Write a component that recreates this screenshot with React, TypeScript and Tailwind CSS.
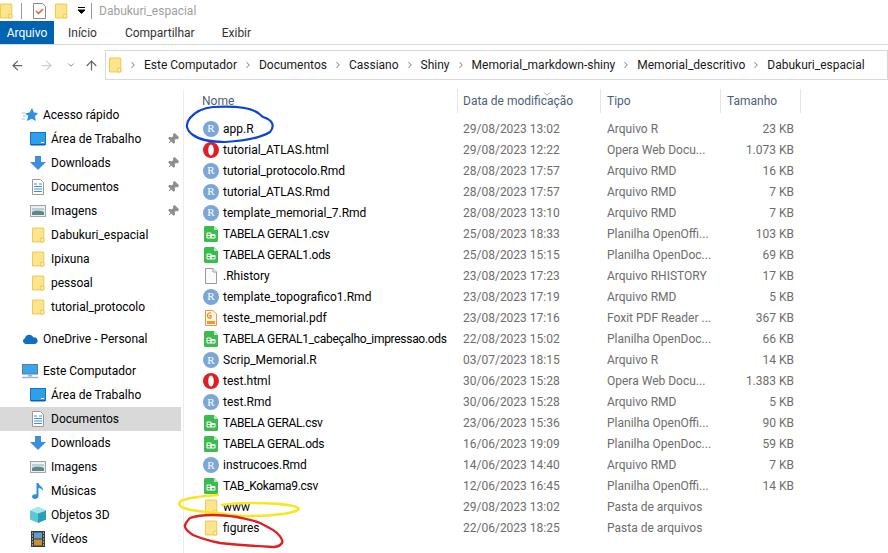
import { ArrowLeft, ArrowRight, ArrowUp, ChevronDown, ChevronRight, Pin } from "lucide-react";

type IconKind = "r" | "opera" | "sheet" | "blank" | "pdf" | "folder";

const files: { name: string; date: string; type: string; size: string; icon: IconKind }[] = [
    { name: "app.R", date: "29/08/2023 13:02", type: "Arquivo R", size: "23 KB", icon: "r" },
    { name: "tutorial_ATLAS.html", date: "29/08/2023 12:22", type: "Opera Web Docu...", size: "1.073 KB", icon: "opera" },
    { name: "tutorial_protocolo.Rmd", date: "28/08/2023 17:57", type: "Arquivo RMD", size: "16 KB", icon: "r" },
    { name: "tutorial_ATLAS.Rmd", date: "28/08/2023 17:57", type: "Arquivo RMD", size: "7 KB", icon: "r" },
    { name: "template_memorial_7.Rmd", date: "28/08/2023 13:10", type: "Arquivo RMD", size: "7 KB", icon: "r" },
    { name: "TABELA GERAL1.csv", date: "25/08/2023 18:33", type: "Planilha OpenOffi...", size: "103 KB", icon: "sheet" },
    { name: "TABELA GERAL1.ods", date: "25/08/2023 15:15", type: "Planilha OpenDoc...", size: "69 KB", icon: "sheet" },
    { name: ".Rhistory", date: "23/08/2023 17:23", type: "Arquivo RHISTORY", size: "17 KB", icon: "blank" },
    { name: "template_topografico1.Rmd", date: "23/08/2023 17:19", type: "Arquivo RMD", size: "5 KB", icon: "r" },
    { name: "teste_memorial.pdf", date: "23/08/2023 17:16", type: "Foxit PDF Reader ...", size: "367 KB", icon: "pdf" },
    { name: "TABELA GERAL1_cabeçalho_impressao.ods", date: "22/08/2023 15:02", type: "Planilha OpenDoc...", size: "66 KB", icon: "sheet" },
    { name: "Scrip_Memorial.R", date: "03/07/2023 18:15", type: "Arquivo R", size: "14 KB", icon: "r" },
    { name: "test.html", date: "30/06/2023 15:28", type: "Opera Web Docu...", size: "1.383 KB", icon: "opera" },
    { name: "test.Rmd", date: "30/06/2023 15:28", type: "Arquivo RMD", size: "5 KB", icon: "r" },
    { name: "TABELA GERAL.csv", date: "23/06/2023 15:36", type: "Planilha OpenOffi...", size: "90 KB", icon: "sheet" },
    { name: "TABELA GERAL.ods", date: "16/06/2023 19:09", type: "Planilha OpenDoc...", size: "59 KB", icon: "sheet" },
    { name: "instrucoes.Rmd", date: "14/06/2023 14:40", type: "Arquivo RMD", size: "7 KB", icon: "r" },
    { name: "TAB_Kokama9.csv", date: "12/06/2023 16:45", type: "Planilha OpenOffi...", size: "14 KB", icon: "sheet" },
    { name: "www", date: "29/08/2023 13:02", type: "Pasta de arquivos", size: "", icon: "folder" },
    { name: "figures", date: "22/06/2023 18:25", type: "Pasta de arquivos", size: "", icon: "folder" },
];

const crumbs = ["Este Computador", "Documentos", "Cassiano", "Shiny", "Memorial_markdown-shiny", "Memorial_descritivo", "Dabukuri_espacial"];

function FolderIcon({ className }: { className?: string }) {
    return (
        <svg viewBox="0 0 14 16" className={className}>
            <path d="M.5.5h12.2v15H.5z" fill="#fde48f" stroke="#eec643" />
            <path d="M9.5 15.5v-4h3.2v4z" fill="#fff2bd" stroke="#eec643" />
        </svg>
    );
}

function RIcon() {
    return (
        <span className="flex h-4 w-4 shrink-0 items-center justify-center rounded-full bg-[#7ba7d7] font-['Liberation_Serif',serif] text-[11px] leading-none text-white">R</span>
    );
}

function OperaIcon() {
    return (
        <svg viewBox="0 0 16 16" className="h-4 w-4 shrink-0">
            <path fillRule="evenodd" d="M8 0a8 8 0 1 0 0 16A8 8 0 0 0 8 0zm0 2.500c1.700 0 2.800 2.500 2.800 5.500S9.700 13.500 8 13.500 5.200 11 5.200 8 6.300 2.500 8 2.500z" fill="#dc1f28" />
        </svg>
    );
}

function SheetIcon() {
    return (
        <svg viewBox="0 0 16 16" className="h-4 w-4 shrink-0">
            <path d="M1 1.500A1.500 1.500 0 0 1 2.500 0H11l4 4v10.500a1.500 1.500 0 0 1-1.500 1.500h-11A1.500 1.500 0 0 1 1 14.500z" fill="#3dbb4e" />
            <path d="M11 0l4 4h-4z" fill="#b5e8ba" />
            <path d="M4 7h4v5H4zM8 8.500h4V12H8z" fill="none" stroke="#fff" strokeWidth="1" />
            <path d="M4 9.500h8" stroke="#fff" strokeWidth="1" />
        </svg>
    );
}

function BlankIcon() {
    return (
        <svg viewBox="0 0 16 16" className="h-4 w-4 shrink-0">
            <path d="M2.500.5h7.500l3.500 3.500v11.500h-11z" fill="#fafafa" stroke="#9a9a9a" />
            <path d="M10 .5v3.500h3.500" fill="#fff" stroke="#9a9a9a" />
        </svg>
    );
}

function PdfIcon() {
    return (
        <svg viewBox="0 0 16 16" className="h-4 w-4 shrink-0">
            <path d="M2.500.5h7.500l3.500 3.500v11.500h-11z" fill="#fff7ec" stroke="#ef9a2e" />
            <path d="M10.500 2.500a3 3 0 1 0 0 5.500V5.500H8" fill="none" stroke="#ef8a1e" strokeWidth="1.500" transform="translate(-1 1) scale(.85)" />
            <path d="M4 11h8v3H4z" fill="#ef9a2e" />
        </svg>
    );
}

function FileIcon({ kind }: { kind: IconKind }) {
    if (kind === "r") return <RIcon />;
    if (kind === "opera") return <OperaIcon />;
    if (kind === "sheet") return <SheetIcon />;
    if (kind === "pdf") return <PdfIcon />;
    if (kind === "folder") return <span className="flex w-4 shrink-0 justify-center"><FolderIcon className="h-4 w-[13px]" /></span>;
    return <BlankIcon />;
}

function DesktopIcon() {
    return (
        <svg viewBox="0 0 16 14" className="h-[14px] w-4">
            <rect x=".5" y=".5" width="15" height="12" fill="#2f9fe8" stroke="#1473c4" />
            <path d="M1 12h14v1.500H1z" fill="#0e5fb0" />
            <path d="M11 10.500h3" stroke="#fff" />
        </svg>
    );
}

function DownloadIcon() {
    return (
        <svg viewBox="0 0 16 14" className="h-[14px] w-4">
            <path d="M5 0h6v6h5l-8 8-8-8h5z" fill="#3b8fdd" />
        </svg>
    );
}

function DocIcon() {
    return (
        <svg viewBox="0 0 12 16" className="h-4 w-3">
            <path d="M.5.500h8l3 3v12H.5z" fill="#fff" stroke="#9a9a9a" />
            <path d="M2 5h3M7 5h3M2 7.500h8M2 10h8M2 12.500h8" stroke="#3f8fd8" />
        </svg>
    );
}

function ImageIcon() {
    return (
        <svg viewBox="0 0 16 12" className="h-3 w-4">
            <rect x=".5" y=".5" width="15" height="11" fill="#e9f1f6" stroke="#a5a5a5" />
            <path d="M2 7c3-2 8-2 12 0v3H2z" fill="#5d8a80" />
            <path d="M2 3h12v2.500H2z" fill="#b5cfe0" />
        </svg>
    );
}

function MusicIcon() {
    return (
        <svg viewBox="0 0 14 16" className="h-4 w-[14px]">
            <path d="M5.500 0h2c.5 3 5 3.500 4.500 8-1-2-2.500-3-4.500-3v8c0 2-1.700 3-3.500 3S1 15 1 13.500 2.500 11 5.500 11.200z" fill="#2a8fe6" />
        </svg>
    );
}

function CubeIcon() {
    return (
        <svg viewBox="0 0 16 16" className="h-4 w-4">
            <path d="M8 0l8 3.500v9L8 16 0 12.500v-9z" fill="#5fc8d8" />
            <path d="M8 6.500l8-3v9L8 16z" fill="#2b9fb8" />
            <path d="M0 3.500l8 3L16 3.500 8 0z" fill="#a6e7ee" />
        </svg>
    );
}

function VideoIcon() {
    return (
        <svg viewBox="0 0 14 16" className="h-4 w-[14px]">
            <rect width="14" height="16" fill="#3a3a3a" />
            <rect x="3" y="1.500" width="8" height="6" fill="#5f9fd0" />
            <rect x="3" y="8.500" width="8" height="6" fill="#c8902f" />
            <path d="M1 2h1M1 5h1M1 8h1M1 11h1M1 14h1M12 2h1M12 5h1M12 8h1M12 11h1M12 14h1" stroke="#fff" />
        </svg>
    );
}

function QuickAccessIcon() {
    return (
        <svg viewBox="0 0 16 16" className="h-4 w-4">
            <path d="M10 1l2 4.500 4 .5-3 3.200.8 4.800-4-2.300-5 2.300 1.500-5L3 6.500l4.500-1z" fill="#2f8fe0" />
            <path d="M0 6h3M1 9h3M0 12h3" stroke="#9cc7ea" />
        </svg>
    );
}

function OneDriveIcon() {
    return (
        <svg viewBox="0 0 16 10" className="h-[10px] w-4">
            <path d="M3.500 10A3 3 0 0 1 3 4.200 4.500 4.500 0 0 1 11.500 3.500 3.300 3.300 0 0 1 13 10z" fill="#0f6fc6" />
        </svg>
    );
}

function PcIcon() {
    return (
        <svg viewBox="0 0 16 15" className="h-[15px] w-4">
            <rect x=".5" y=".5" width="15" height="9.500" fill="#3ba4ea" stroke="#5a7d9c" />
            <path d="M6 10.500h4v2H6z" fill="#9ab4c8" />
            <path d="M0 13.500h16" stroke="#9fb5c6" strokeWidth="1.500" />
        </svg>
    );
}

function NavRow({ label, icon, pinned, selected }: { label: string; icon: React.ReactNode; pinned?: boolean; selected?: boolean }) {
    return (
        <div className={`flex h-6 w-[181px] items-center pl-[30px] ${selected ? "bg-[#d9d9d9]" : ""}`}>
            <span className="flex w-4 justify-center">{icon}</span>
            <span className="ml-[5px] flex-1 text-black">{label}</span>
            {pinned && <Pin size={12} fill="#8f8f8f" className="mr-[2px] rotate-45 text-[#8f8f8f]" />}
        </div>
    );
}

function TopRow({ label, icon }: { label: string; icon: React.ReactNode }) {
    return (
        <div className="flex h-6 items-center pl-[22px]">
            <span className="flex w-4 justify-center">{icon}</span>
            <span className="ml-[5px] text-black">{label}</span>
        </div>
    );
}

function HeaderCell({ label, className }: { label: string; className: string }) {
    return <div className={`flex h-[24px] items-center border-r border-[#e5e5e5] ${className}`}>{label}</div>;
}

export default function App() {
    return (
        <div className="relative h-[553px] w-[888px] overflow-hidden bg-white font-['Roboto',sans-serif] text-[12px] text-black">
            {/* title bar */}
            <div className="flex h-[21px] items-center">
                <FolderIcon className="h-4 w-[13px]" />
                <span className="ml-2 h-4 w-px bg-[#9a9a9a]" />
                <svg viewBox="0 0 13 16" className="ml-[11px] h-4 w-[13px]">
                    <path d="M.5.500h9l3 3v12H.5z" fill="#fff" stroke="#8a8a8a" />
                    <path d="M3 8l2.500 2.500L10 6" fill="none" stroke="#e8562a" strokeWidth="1.500" />
                </svg>
                <FolderIcon className="ml-[9px] h-4 w-[13px]" />
                <svg viewBox="0 0 9 7" className="ml-[9px] h-[7px] w-[9px]">
                    <path d="M1 .5h7M1 3h7L4.500 6.500z" fill="#000" stroke="#000" strokeWidth="1" />
                </svg>
                <span className="ml-[5px] h-4 w-px bg-[#9a9a9a]" />
                <span className="ml-[7px] text-[#a0a0a0]">Dabukuri_espacial</span>
            </div>

            {/* ribbon tabs */}
            <div className="flex h-[24px] items-center border-b border-[#dadada] text-[#333]">
                <div className="flex h-[23px] w-[54px] items-center justify-center bg-[#0063b1] text-white">Arquivo</div>
                <span className="ml-[14px]">Início</span>
                <span className="ml-[28px]">Compartilhar</span>
                <span className="ml-[27px]">Exibir</span>
            </div>

            {/* nav + address bar */}
            <div className="mt-[5px] flex h-[30px] items-center">
                <ArrowLeft size={15} strokeWidth={2} className="ml-[10px] text-[#666]" />
                <ArrowRight size={15} strokeWidth={2} className="ml-[14px] text-[#cfcfcf]" />
                <ChevronDown size={10} strokeWidth={2} className="ml-[12px] text-[#777]" />
                <ArrowUp size={15} strokeWidth={2} className="ml-[8px] text-[#666]" />
                <div className="ml-[6px] flex h-[30px] flex-1 items-center overflow-hidden whitespace-nowrap border border-[#d9d9d9] pl-[3px] text-[#1a1a1a]">
                    <FolderIcon className="h-4 w-[13px] shrink-0" />
                    {crumbs.map((c) => (
                        <span key={c} className="flex shrink-0 items-center">
                            <ChevronRight size={10} strokeWidth={2.5} className="mx-[6px] text-[#8a8a8a]" />
                            <span>{c}</span>
                        </span>
                    ))}
                </div>
            </div>

            <div className="mt-[9px] flex">
                {/* nav pane */}
                <div className="h-[470px] w-[184px] shrink-0 border-r border-[#ededed] pt-[14px]">
                    <TopRow label="Acesso rápido" icon={<QuickAccessIcon />} />
                    <NavRow label="Área de Trabalho" icon={<DesktopIcon />} pinned />
                    <NavRow label="Downloads" icon={<DownloadIcon />} pinned />
                    <NavRow label="Documentos" icon={<DocIcon />} pinned />
                    <NavRow label="Imagens" icon={<ImageIcon />} pinned />
                    <NavRow label="Dabukuri_espacial" icon={<FolderIcon className="h-4 w-[13px]" />} />
                    <NavRow label="Ipixuna" icon={<FolderIcon className="h-4 w-[13px]" />} />
                    <NavRow label="pessoal" icon={<FolderIcon className="h-4 w-[13px]" />} />
                    <NavRow label="tutorial_protocolo" icon={<FolderIcon className="h-4 w-[13px]" />} />
                    <div className="mt-2"><TopRow label="OneDrive - Personal" icon={<OneDriveIcon />} /></div>
                    <div className="mt-2"><TopRow label="Este Computador" icon={<PcIcon />} /></div>
                    <NavRow label="Área de Trabalho" icon={<DesktopIcon />} />
                    <NavRow label="Documentos" icon={<DocIcon />} selected />
                    <NavRow label="Downloads" icon={<DownloadIcon />} />
                    <NavRow label="Imagens" icon={<ImageIcon />} />
                    <NavRow label="Músicas" icon={<MusicIcon />} />
                    <NavRow label="Objetos 3D" icon={<CubeIcon />} />
                    <NavRow label="Vídeos" icon={<VideoIcon />} />
                </div>

                {/* file list */}
                <div className="flex-1 pl-[18px]">
                    <div className="relative flex h-[29px] text-[#4c607a]">
                        <ChevronDown size={10} className="absolute left-[340px] top-0 text-[#9a9a9a]" />
                        <HeaderCell label="Nome" className="w-[256px]" />
                        <HeaderCell label="Data de modificação" className="w-[143px] pl-[5px]" />
                        <HeaderCell label="Tipo" className="w-[120px] pl-[6px]" />
                        <HeaderCell label="Tamanho" className="w-[80px] pl-[6px]" />
                    </div>
                    {files.map((f) => (
                        <div key={f.name} className="flex h-[21.05px] items-center">
                            <div className="flex w-[256px] items-center pl-px">
                                <FileIcon kind={f.icon} />
                                <span className={`ml-1 whitespace-nowrap ${f.icon === "sheet" ? "tracking-[-0.3px]" : ""}`}>{f.name}</span>
                            </div>
                            <div className="w-[143px] pl-[5px] text-[#6d6d6d]">{f.date}</div>
                            <div className="w-[120px] pl-[6px] text-[#6d6d6d]">{f.type}</div>
                            <div className="w-[73px] text-right text-[#6d6d6d]">{f.size}</div>
                        </div>
                    ))}
                </div>
            </div>

            {/* hand-drawn marks */}
            <svg viewBox="0 0 888 553" className="pointer-events-none absolute inset-0 h-[553px] w-[888px]" fill="none" strokeLinecap="round">
                <path d="M258 113C250 107 232 106 213 107 202 108 195 112 190 118 185 124 186 130 193 135 200 140 210 142 225 142 245 141 262 137 270 132 275 126 273 120 263 117L257 112" stroke="#0a45d8" strokeWidth="2.2" />
                <path d="M218 495C205 496 188 497 181 501 177 504 180 507 187 509 197 512 213 512 225 514 240 517 265 516 283 514 295 512 300 510 298 508 293 504 265 503 250 503 238 503 228 504 222 505" stroke="#f8e71c" strokeWidth="2.6" />
                <path d="M190 518C198 515 207 515 213 515 222 515 230 516 237 517 245 519 253 520 260 523 268 527 274 530 277 533 281 537 283 541 282 543 280 546 276 547 273 547 255 546 237 545 220 543 210 541 200 538 193 535 187 531 184 528 185 525 186 522 188 520 190 518" stroke="#e02020" strokeWidth="2.4" />
            </svg>
        </div>
    );
}
